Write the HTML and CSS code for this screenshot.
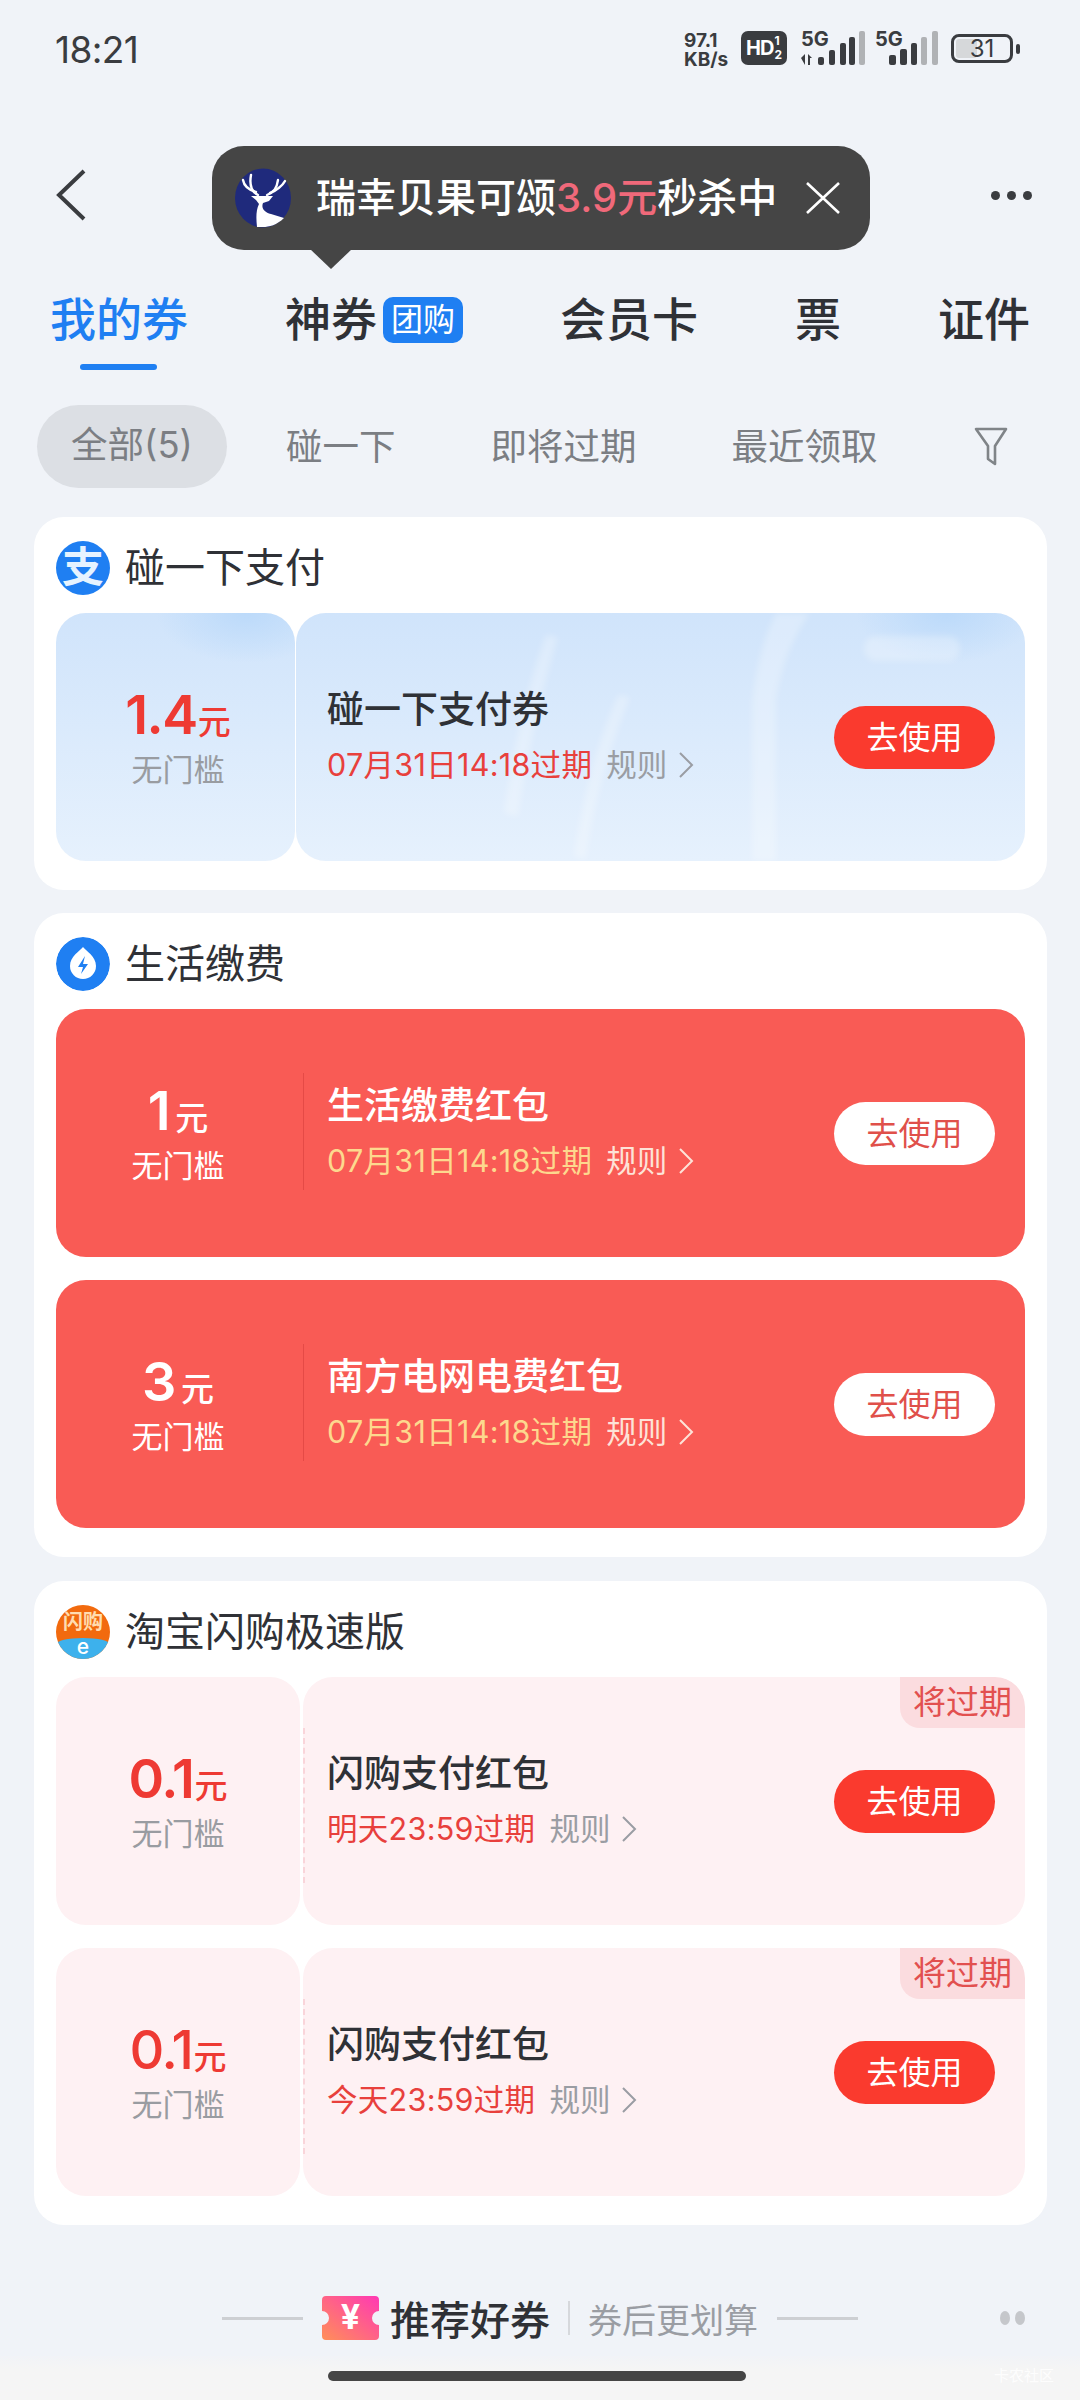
FILE: index.html
```html
<!DOCTYPE html>
<html lang="zh-CN">
<head>
  <meta charset="UTF-8">
  <meta name="viewport" content="width=device-width, initial-scale=1.0">
  <title>我的券</title>
  <link rel="stylesheet" href="styles.css">
</head>
<body>
<div class="page">

  <!-- Status bar -->
  <div class="status">
    <div class="time">18:21</div>
    <div class="status-icons">
      <div class="speed"><span>97.1</span><span>KB/s</span></div>
      <div class="hd"><span class="hd-main">HD</span><span class="hd-sims"><span>1</span><span>2</span></span></div>
      <div class="net net-one">
        <span class="net-label">5G</span>
        <svg width="66" height="36" viewBox="0 0 66 36">
          <path d="M2 27l4-4v11zM9 23l4 4H11v7H9z" fill="#3a3c40"/>
          <rect x="19" y="26" width="6" height="8" rx="2" fill="#3a3c40"/>
          <rect x="30" y="19" width="6" height="15" rx="2" fill="#3a3c40"/>
          <rect x="41" y="12" width="6" height="22" rx="2" fill="#3a3c40"/>
          <rect x="50" y="6" width="6" height="28" rx="2" fill="#3a3c40"/>
          <rect x="60" y="0" width="6" height="34" rx="2" fill="#b0b2b5"/>
        </svg>
      </div>
      <div class="net net-two">
        <span class="net-label">5G</span>
        <svg width="50" height="36" viewBox="0 0 50 36">
          <rect x="0" y="24" width="7" height="10" rx="2" fill="#3a3c40"/>
          <rect x="11" y="18" width="7" height="16" rx="2" fill="#3a3c40"/>
          <rect x="22" y="12" width="6" height="22" rx="2" fill="#3a3c40"/>
          <rect x="32" y="6" width="6" height="28" rx="2" fill="#b0b2b5"/>
          <rect x="43" y="0" width="6" height="34" rx="2" fill="#b0b2b5"/>
        </svg>
      </div>
      <div class="battery"><span class="battery-fill"></span><span class="battery-num">31</span></div>
      <div class="battery-nub"></div>
    </div>
  </div>

  <!-- Nav row, the tooltip floats over it -->
  <div class="nav">
    <svg class="back" width="32" height="52" viewBox="0 0 32 52"><path d="M29 2L4 26l25 24" fill="none" stroke="#3a3c40" stroke-width="4"/></svg>
    <div class="more"><i></i><i></i><i></i></div>
    <div class="tip">
      <svg class="deer" width="58" height="60" viewBox="0 0 58 60">
        <ellipse cx="29" cy="30" rx="28" ry="29.5" fill="#1f2a7c"/>
        <g fill="none" stroke="#fff" stroke-width="2.4" stroke-linecap="round">
          <path d="M24 27C18 24 15 18 17 7"/>
          <path d="M22 24C15 22 10 18 9 12"/>
          <path d="M33 27C40 24 43 20 44 12"/>
          <path d="M36 25C42 23 49 17 51 13"/>
        </g>
        <path d="M17 28H39L35 33 29 35C27 40 30 44 37 46L50 50C43 57 35 59 29 59H23C22 50 22 42 25 36L22 32Z" fill="#fff"/>
      </svg>
      <div class="tip-text">瑞幸贝果可颂<span class="tip-price">3.9元</span>秒杀中</div>
      <svg class="tip-close" width="36" height="32" viewBox="0 0 36 32"><path d="M2 1l32 30M34 1L2 31" stroke="#fff" stroke-width="2.6" fill="none"/></svg>
    </div>
  </div>

  <!-- Tabs -->
  <div class="tabs">
    <div class="tab active">我的券</div>
    <div class="tab">神券<span class="tab-badge">团购</span></div>
    <div class="tab">会员卡</div>
    <div class="tab">票</div>
    <div class="tab">证件</div>
  </div>

  <!-- Filters -->
  <div class="filters">
    <div class="pill">全部(5)</div>
    <div class="filter first">碰一下</div>
    <div class="filter">即将过期</div>
    <div class="filter">最近领取</div>
    <svg class="funnel" width="34" height="40" viewBox="0 0 34 40"><path d="M2 2h30L21 19v18l-7-5V19z" fill="none" stroke="#808488" stroke-width="2.6" stroke-linejoin="round"/></svg>
  </div>

  <!-- Touch pay -->
  <div class="section">
    <div class="section-head">
      <div class="logo logo-pay">支</div>
      <div class="section-title">碰一下支付</div>
    </div>
    <div class="coupon coupon-blue">
      <div class="left">
        <div class="amount"><b>1.4</b><span>元</span></div>
        <div class="limit">无门槛</div>
      </div>
      <div class="right">
        <svg class="streaks" width="730" height="248" viewBox="0 0 730 248">
          <g fill="#fff" opacity=".26">
            <path d="M250 22l12 2c-12 40-30 110-40 180l-14-4c8-60 24-130 42-178z"/>
            <path d="M322 82l12 2c-16 40-36 100-44 162l-12-2c8-60 26-122 44-162z"/>
            <path d="M480 0h34c-16 22-28 50-34 86v162h-24V90c4-36 12-66 24-90z"/>
            <rect x="568" y="23" width="96" height="25" rx="12"/>
          </g>
        </svg>
        <div class="info">
          <div class="name">碰一下支付券</div>
          <div class="meta"><span class="expire">07月31日14:18过期</span><span class="rule">规则</span>
            <svg class="chev" width="16" height="28" viewBox="0 0 16 28"><path d="M2 2l12 12L2 26" fill="none" stroke="#9a9da3" stroke-width="2"/></svg>
          </div>
        </div>
        <div class="use">去使用</div>
      </div>
    </div>
  </div>

  <!-- Bills -->
  <div class="section">
    <div class="section-head">
      <div class="logo">
        <svg width="54" height="54" viewBox="0 0 54 54">
          <circle cx="27" cy="27" r="27" fill="#1f7ff2"/>
          <path d="M27 10c3 4 13 9 13 19a13 13 0 0 1-26 0c0-10 10-15 13-19z" fill="#fff"/>
          <path d="M29 19l-7 11h5l-2 7 7-10h-5z" fill="#1f7ff2"/>
        </svg>
      </div>
      <div class="section-title">生活缴费</div>
    </div>
    <div class="coupon coupon-red">
      <div class="left">
        <div class="amount"><b>1</b><span>元</span></div>
        <div class="limit">无门槛</div>
      </div>
      <div class="right">
        <div class="info">
          <div class="name">生活缴费红包</div>
          <div class="meta"><span class="expire">07月31日14:18过期</span><span class="rule">规则</span>
            <svg class="chev" width="16" height="28" viewBox="0 0 16 28"><path d="M2 2l12 12L2 26" fill="none" stroke="#fde3d8" stroke-width="2"/></svg>
          </div>
        </div>
        <div class="use">去使用</div>
      </div>
    </div>
    <div class="coupon coupon-red">
      <div class="left">
        <div class="amount"><b>3</b><span>元</span></div>
        <div class="limit">无门槛</div>
      </div>
      <div class="right">
        <div class="info">
          <div class="name">南方电网电费红包</div>
          <div class="meta"><span class="expire">07月31日14:18过期</span><span class="rule">规则</span>
            <svg class="chev" width="16" height="28" viewBox="0 0 16 28"><path d="M2 2l12 12L2 26" fill="none" stroke="#fde3d8" stroke-width="2"/></svg>
          </div>
        </div>
        <div class="use">去使用</div>
      </div>
    </div>
  </div>

  <!-- Flash buy -->
  <div class="section">
    <div class="section-head">
      <div class="logo logo-flash">
        <div class="flash-top">闪购</div>
        <div class="flash-bottom">e</div>
      </div>
      <div class="section-title">淘宝闪购极速版</div>
    </div>
    <div class="coupon coupon-pink">
      <div class="left">
        <div class="amount"><b>0.1</b><span>元</span></div>
        <div class="limit">无门槛</div>
      </div>
      <div class="right">
        <div class="tag">将过期</div>
        <div class="info">
          <div class="name">闪购支付红包</div>
          <div class="meta"><span class="expire">明天23:59过期</span><span class="rule">规则</span>
            <svg class="chev" width="16" height="28" viewBox="0 0 16 28"><path d="M2 2l12 12L2 26" fill="none" stroke="#9a9da3" stroke-width="2"/></svg>
          </div>
        </div>
        <div class="use">去使用</div>
      </div>
    </div>
    <div class="coupon coupon-pink">
      <div class="left">
        <div class="amount"><b class="thin">0.1</b><span>元</span></div>
        <div class="limit">无门槛</div>
      </div>
      <div class="right">
        <div class="tag">将过期</div>
        <div class="info">
          <div class="name">闪购支付红包</div>
          <div class="meta"><span class="expire">今天23:59过期</span><span class="rule">规则</span>
            <svg class="chev" width="16" height="28" viewBox="0 0 16 28"><path d="M2 2l12 12L2 26" fill="none" stroke="#9a9da3" stroke-width="2"/></svg>
          </div>
        </div>
        <div class="use">去使用</div>
      </div>
    </div>
  </div>

  <!-- Recommended -->
  <div class="recommend">
    <span class="rec-line"></span>
    <svg class="ticket" width="57" height="44" viewBox="0 0 57 44">
      <defs>
        <linearGradient id="ticketFill" x1="0" y1="1" x2="1" y2="0">
          <stop offset="0" stop-color="#ff8f58"/>
          <stop offset="1" stop-color="#ff38b4"/>
        </linearGradient>
      </defs>
      <path d="M4 0h49a4 4 0 0 1 4 4v11a7 7 0 0 0 0 14v11a4 4 0 0 1-4 4H4a4 4 0 0 1-4-4V29a7 7 0 0 0 0-14V4a4 4 0 0 1 4-4z" fill="url(#ticketFill)"/>
      <text x="28.5" y="33" text-anchor="middle" class="ticket-mark">¥</text>
    </svg>
    <span class="rec-title">推荐好券</span>
    <span class="rec-sep"></span>
    <span class="rec-sub">券后更划算</span>
    <span class="rec-line last"></span>
    <div class="float-dots"><i></i><i></i></div>
  </div>

  <!-- Home indicator -->
  <div class="home">
    <div class="home-bar"></div>
    <div class="mark">卡农社区</div>
  </div>

</div>
</body>
</html>
```

FILE: styles.css
```css
* {
  box-sizing: border-box;
}
body {
  margin: 0;
  background: #f0f3f8;
  font-family: Inter, "Noto Sans CJK SC", sans-serif;
  color: #2f3136;
}
.page {
  width: 1080px;
  height: 2400px;
  overflow: hidden;
  display: flex;
  flex-direction: column;
}

/* Status bar */
.status {
  height: 98px;
  padding: 30px 60px 0 55px;
  display: flex;
  justify-content: space-between;
  align-items: flex-start;
  color: #3a3c40;
}
.time {
  font-size: 37px;
  line-height: 40px;
  letter-spacing: -.6px;
}
.status-icons {
  display: flex;
  align-items: flex-start;
  padding-top: 1px;
}
.speed {
  display: flex;
  flex-direction: column;
  width: 50px;
  font-size: 19px;
  line-height: 19px;
  font-weight: 700;
}
.hd {
  margin-left: 7px;
  width: 46px;
  height: 34px;
  background: #3a3c40;
  border-radius: 7px;
  color: #fff;
  font-weight: 700;
  display: flex;
  align-items: center;
  justify-content: center;
  font-size: 20px;
}
.hd-main {
  letter-spacing: -1px;
}
.hd-sims {
  display: flex;
  flex-direction: column;
  font-size: 12px;
  line-height: 14px;
  margin-left: 1px;
}
.net {
  position: relative;
  height: 36px;
}
.net-one {
  margin-left: 12px;
  width: 66px;
}
.net-two {
  margin-left: 8px;
  width: 66px;
  display: flex;
  justify-content: flex-end;
}
.net-label {
  position: absolute;
  left: 2px;
  top: -2px;
  font-size: 20px;
  line-height: 20px;
  font-weight: 700;
}
.net-one svg {
  display: block;
}
.battery {
  position: relative;
  margin-left: 12px;
  margin-top: 3px;
  width: 62px;
  height: 29px;
  border: 3px solid #3a3c40;
  border-radius: 8px;
  font-size: 24px;
  line-height: 23px;
  text-align: center;
}
.battery-fill {
  position: absolute;
  left: 2px;
  top: 2px;
  bottom: 2px;
  width: 21px;
  background: #d6d8da;
  border-radius: 3px;
}
.battery-num {
  position: relative;
}
.battery-nub {
  margin: 13px 0 0 3px;
  width: 4px;
  height: 10px;
  background: #3a3c40;
  border-radius: 2px;
}

/* Nav row */
.nav {
  position: relative;
  height: 98px;
  margin-top: 48px;
  padding: 0 48px 0 55px;
  display: flex;
  justify-content: space-between;
  align-items: center;
}
.more {
  display: flex;
  gap: 7px;
}
.more i {
  width: 9px;
  height: 9px;
  border-radius: 50%;
  background: #3a3c40;
}
.tip {
  position: absolute;
  left: 212px;
  top: 0;
  width: 658px;
  height: 104px;
  background: #454545;
  border-radius: 32px;
  display: flex;
  align-items: center;
  color: #fff;
  padding-left: 22px;
}
.tip::after {
  content: "";
  position: absolute;
  left: 98px;
  bottom: -19px;
  border-left: 21px solid transparent;
  border-right: 21px solid transparent;
  border-top: 20px solid #454545;
}
.tip-text {
  margin-left: 24px;
  font-size: 40px;
  font-weight: 500;
  line-height: 46px;
  white-space: nowrap;
}
.tip-price {
  color: #f0697a;
}
.tip-close {
  margin-left: 28px;
}

/* Tabs */
.tabs {
  height: 100px;
  margin-top: 26px;
  padding: 0 50px 0 50px;
  display: flex;
  justify-content: space-between;
}
.tab {
  position: relative;
  height: 100px;
  font-size: 46px;
  line-height: 98px;
  font-weight: 500;
  display: flex;
  align-items: flex-start;
  white-space: nowrap;
}
.tab.active {
  color: #1f7ff2;
}
.tab.active::after {
  content: "";
  position: absolute;
  left: 30px;
  bottom: 0;
  width: 77px;
  height: 6px;
  border-radius: 3px;
  background: #1f7ff2;
}
.tab-badge {
  margin: 27px 0 0 6px;
  width: 80px;
  height: 46px;
  border-radius: 10px;
  background: #1f7ff2;
  color: #fff;
  font-size: 32px;
  line-height: 46px;
  font-weight: 400;
  text-align: center;
}

/* Filters */
.filters {
  height: 83px;
  margin-top: 35px;
  padding-left: 37px;
  display: flex;
  align-items: center;
  color: #7b7e83;
  font-size: 36.5px;
  line-height: 80px;
}
.pill {
  width: 190px;
  height: 83px;
  border-radius: 42px;
  background: #dcdfe4;
  text-align: center;
}
.filter {
  margin-left: 95px;
}
.filter.first {
  margin-left: 59px;
}
.funnel {
  margin: 0 0 0 96px;
}

/* Sections */
.section {
  margin: 29px 33px 0 34px;
  padding: 0 22px 29px;
  background: #fff;
  border-radius: 30px;
  display: flex;
  flex-direction: column;
  gap: 23px;
}
.section + .section {
  margin-top: 23px;
}
.section + .section + .section {
  margin-top: 24px;
}
.section-head {
  display: flex;
  align-items: flex-end;
  padding-bottom: 18px;
  height: 96px;
  margin-bottom: -23px;
}
.logo {
  width: 54px;
  height: 54px;
  border-radius: 50%;
  overflow: hidden;
  flex-shrink: 0;
}
.logo svg {
  display: block;
}
.logo-pay {
  background: #1f7ff2;
  color: #e6f3ff;
  font-size: 42px;
  font-weight: 700;
  line-height: 52px;
  text-align: center;
}
.logo-flash {
  display: flex;
  flex-direction: column;
  background: #f26a0e;
}
.flash-top {
  height: 33px;
  color: #ffdcb0;
  font-size: 20px;
  font-weight: 700;
  line-height: 34px;
  text-align: center;
}
.flash-bottom {
  height: 21px;
  border-radius: 50% 50% 0 0 / 30% 30% 0 0;
  background: #3db1ec;
  color: #fff;
  font-size: 21px;
  font-weight: 500;
  line-height: 17px;
  text-align: center;
}
.section-title {
  margin-left: 15px;
  height: 54px;
  font-size: 40px;
  line-height: 54px;
}

/* Coupons */
.coupon {
  height: 248px;
  display: flex;
  border-radius: 30px;
}
.left {
  flex-shrink: 0;
  display: flex;
  flex-direction: column;
  align-items: center;
  justify-content: center;
}
.amount {
  display: flex;
  align-items: baseline;
  height: 66px;
  line-height: 66px;
  color: #ee3a33;
}
.amount b {
  font-size: 54px;
  font-weight: 600;
  letter-spacing: -1.5px;
}
.amount b.thin {
  font-weight: 500;
}
.amount span {
  margin-left: 1px;
  font-size: 33px;
  font-weight: 500;
}
.limit {
  font-size: 31px;
  line-height: 44px;
  color: #999ca1;
}
.right {
  position: relative;
  flex: 1;
  display: flex;
  align-items: center;
  justify-content: space-between;
  padding-right: 30px;
}
.info {
  position: relative;
  margin-top: -2px;
}
.name {
  font-size: 37px;
  line-height: 50px;
  font-weight: 500;
  color: #2f3136;
}
.meta {
  margin-top: 8px;
  display: flex;
  align-items: center;
  font-size: 30.5px;
  line-height: 44px;
}
.expire {
  color: #e8403c;
  letter-spacing: .3px;
}
.rule {
  margin-left: 14px;
  color: #9a9da3;
}
.chev {
  margin-left: 11px;
}
.use {
  position: relative;
  width: 161px;
  height: 63px;
  border-radius: 32px;
  background: #fa3a2e;
  color: #fff;
  font-size: 32px;
  line-height: 63px;
  text-align: center;
}

/* Blue coupon */
.coupon-blue .left {
  width: 239px;
  padding-left: 5px;
  border-radius: 30px;
  background:
    radial-gradient(90px 50px at 190px 0, #bcdafa, transparent),
    linear-gradient(#d0e4fb, #e6f1fd);
}
.coupon-blue .right {
  margin-left: 1px;
  padding-left: 31px;
  border-radius: 30px;
  background:
    radial-gradient(90px 50px at 650px 0, #bcdafa, transparent),
    linear-gradient(#d0e4fb, #e6f1fd);
  overflow: hidden;
}
.streaks {
  position: absolute;
  left: 0;
  top: 0;
  filter: blur(3px);
}

/* Red coupon */
.coupon-red {
  background: #f95b55;
}
.coupon-red .left {
  width: 247px;
  padding-right: 3px;
  color: #fff;
}
.coupon-red .amount,
.coupon-red .limit {
  color: #fff;
}
.coupon-red .amount b {
  margin-right: 5px;
}
.coupon-red .right {
  padding-left: 24px;
}
.coupon-red .right::before {
  content: "";
  position: absolute;
  left: 0;
  top: 64px;
  height: 117px;
  width: 1px;
  background: #e54a46;
}
.coupon-red .name {
  color: #fff;
}
.coupon-red .expire {
  color: #fdd88e;
}
.coupon-red .rule {
  color: #fde3d8;
}
.coupon-red .use {
  background: #fff;
  color: #e0504a;
}

/* Pink coupon */
.coupon-pink .left {
  width: 244px;
  border-radius: 30px;
  background: #fef1f3;
}
.coupon-pink .right {
  margin-left: 3px;
  padding-left: 24px;
  border-radius: 30px;
  background: #fef1f3;
  overflow: hidden;
}
.coupon-pink .right::before {
  content: "";
  position: absolute;
  left: 0;
  top: 51px;
  height: 155px;
  border-left: 2px dashed #f9d5da;
}
.tag {
  position: absolute;
  right: 0;
  top: 0;
  width: 125px;
  height: 51px;
  border-radius: 0 30px 0 20px;
  background: #fbdcdf;
  color: #e2504f;
  font-size: 33px;
  line-height: 51px;
  text-align: center;
}

/* Recommended */
.recommend {
  position: relative;
  height: 60px;
  margin-top: 63px;
  padding-left: 222px;
  display: flex;
  align-items: center;
}
.rec-line {
  width: 81px;
  height: 3px;
  background: #cdcfd3;
}
.rec-line.last {
  margin-left: 19px;
}
.ticket {
  margin-left: 19px;
}
.ticket-mark {
  fill: #fff;
  font-size: 34px;
  font-weight: 700;
}
.rec-title {
  margin-left: 11px;
  font-size: 40px;
  font-weight: 500;
  white-space: nowrap;
}
.rec-sep {
  margin-left: 18px;
  width: 2px;
  height: 34px;
  background: #d6d8dc;
}
.rec-sub {
  margin-left: 18px;
  font-size: 34px;
  color: #9a9da3;
  white-space: nowrap;
}
.float-dots {
  position: absolute;
  right: 55px;
  top: 23px;
  display: flex;
  gap: 5px;
}
.float-dots i {
  width: 10px;
  height: 14px;
  border-radius: 50%;
  background: #c5c7cb;
}

/* Home indicator */
.home {
  position: relative;
  flex: 1;
  margin-top: 8px;
  padding-top: 15px;
  background: linear-gradient(#f1f3f7, #f5f5f5 30%);
}
.home-bar {
  margin-left: 328px;
  width: 418px;
  height: 10px;
  border-radius: 5px;
  background: #454545;
}
.mark {
  position: absolute;
  right: 26px;
  top: 8px;
  font-size: 15px;
  color: rgba(255, 255, 255, .9);
}
```
